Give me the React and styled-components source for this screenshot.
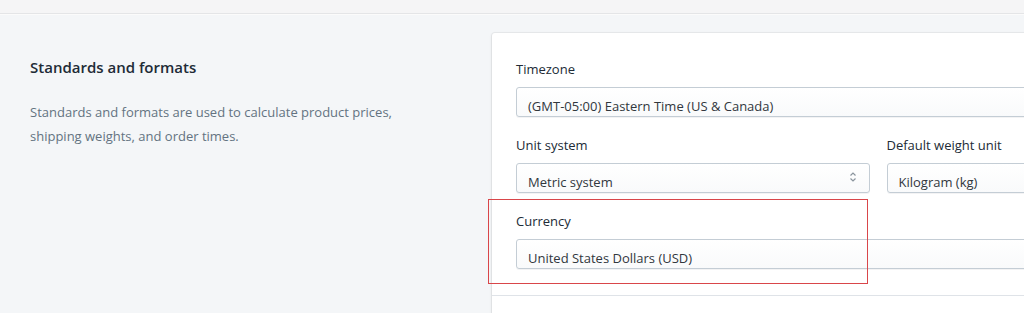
import React from "react";
import styled, { createGlobalStyle } from "styled-components";

const Global = createGlobalStyle`
  html, body { margin: 0; padding: 0; background: #f4f6f8; overflow: hidden; }
  body { font-family: "Open Sans", "Noto Sans", sans-serif; color: #212b36; }
`;

const Page = styled.div`
  width: 1024px;
  height: 313px;
  overflow: hidden;
  background: #f4f6f8;
`;

const TopBand = styled.div`
  height: 13px;
  background: #f5f5f6;
  border-bottom: 1px solid #e4e5e7;
  box-shadow: 0 1px 0 #fbfbfb;
`;

const Section = styled.div`
  display: flex;
  align-items: flex-start;
  padding-top: 19px;
  width: 1300px;
`;

const Intro = styled.div`
  width: 492px;
  flex: none;
  padding: 24px 0 0 30px;
  box-sizing: border-box;
`;

const Title = styled.h2`
  margin: 0;
  font-size: 15px;
  line-height: 20px;
  font-weight: 600;
  color: #212b36;
`;

const Description = styled.p`
  margin: 23px 0 0;
  max-width: 400px;
  font-size: 13px;
  line-height: 24px;
  color: #637381;
`;

const Card = styled.div`
  width: 772px;
  flex: none;
  background: #fff;
  border-radius: 3px;
  box-shadow: 0 0 0 1px rgba(63, 63, 68, 0.06), 0 1px 3px 0 rgba(63, 63, 68, 0.15);
  min-height: 320px;
`;

const CardSection = styled.div`
  padding: 26px 24px 26px;
  display: flex;
  flex-direction: column;
  gap: 18px;
  border-bottom: 1px solid #dfe3e8;
`;

const Row = styled.div`
  display: grid;
  grid-template-columns: 1fr 1fr;
  gap: 17px;
`;

const Field = styled.div`
  position: relative;
  display: flex;
  flex-direction: column;
`;

const Label = styled.label`
  font-size: 13px;
  line-height: 20px;
  color: #212b36;
  margin-bottom: 8px;
`;

const Select = styled.div`
  position: relative;
  height: 30px;
  box-sizing: border-box;
  border: 1px solid #c4cdd5;
  border-radius: 3px;
  background: linear-gradient(#ffffff, #f9fafb);
  box-shadow: 0 1px 0 0 rgba(22, 29, 37, 0.05);
  padding: 8px 32px 0 11px;
  overflow: hidden;
  font-size: 13px;
  line-height: 20px;
  color: #31373d;
  white-space: nowrap;
`;

const Spinner = styled.svg`
  position: absolute;
  right: 11px;
  top: 7px;
  width: 10px;
  height: 12px;
`;

const Annotation = styled.div`
  position: absolute;
  left: -28px;
  top: -12px;
  width: 380px;
  height: 85px;
  border: 1px solid #d9464a;
  box-sizing: border-box;
  pointer-events: none;
`;

function SelectBox({ value, arrows }) {
  return (
    <Select>
      {value}
      {arrows && (
        <Spinner viewBox="0 0 10 12">
          <path d="M2.5 4.5 L5 2 L7.5 4.5" fill="none" stroke="#8b959e" strokeWidth="1.2" />
          <path d="M2.5 7.5 L5 10 L7.5 7.5" fill="none" stroke="#8b959e" strokeWidth="1.2" />
        </Spinner>
      )}
    </Select>
  );
}

export default function App() {
  return (
    <Page>
      <Global />
      <TopBand />
      <Section>
        <Intro>
          <Title>Standards and formats</Title>
          <Description>
            Standards and formats are used to calculate product prices, shipping weights, and order times.
          </Description>
        </Intro>
        <Card>
          <CardSection>
            <Field>
              <Label>Timezone</Label>
              <SelectBox value="(GMT-05:00) Eastern Time (US & Canada)" />
            </Field>
            <Row>
              <Field>
                <Label>Unit system</Label>
                <SelectBox value="Metric system" arrows />
              </Field>
              <Field>
                <Label>Default weight unit</Label>
                <SelectBox value="Kilogram (kg)" arrows />
              </Field>
            </Row>
            <Field>
              <Label>Currency</Label>
              <SelectBox value="United States Dollars (USD)" />
              <Annotation />
            </Field>
          </CardSection>
        </Card>
      </Section>
    </Page>
  );
}
